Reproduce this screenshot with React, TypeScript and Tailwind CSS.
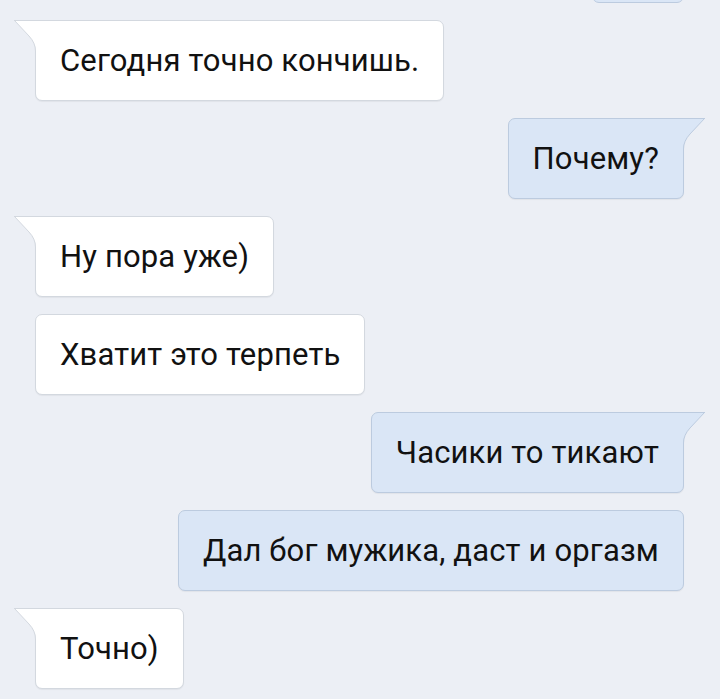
import React from 'react';

type Side = 'in' | 'out';

interface Message {
  text: string;
  side: Side;
  tail?: boolean;
}

const messages: Message[] = [
  { text: 'Сегодня точно кончишь.', side: 'in', tail: true },
  { text: 'Почему?', side: 'out', tail: true },
  { text: 'Ну пора уже)', side: 'in', tail: true },
  { text: 'Хватит это терпеть', side: 'in' },
  { text: 'Часики то тикают', side: 'out', tail: true },
  { text: 'Дал бог мужика, даст и оргазм', side: 'out' },
  { text: 'Точно)', side: 'in', tail: true },
];

const Tail = ({ side }: { side: Side }) => {
  const fill = side === 'in' ? '#ffffff' : '#dae6f6';
  const stroke = side === 'in' ? '#d3d8df' : '#bccbdf';
  return (
    <svg
      width="23"
      height="31"
      viewBox="0 0 23 31"
      className={
        side === 'in'
          ? 'absolute top-[-1px] left-[-22px]'
          : 'absolute top-[-1px] right-[-22px] -scale-x-100'
      }
    >
      <path d="M0 0 L23 0 L23 31 L21 31 L21.5 30 Q21.5 23 15 16 L0 0 Z" fill={fill} />
      <path d="M0 0.5 L23 0.5" stroke={stroke} strokeWidth="1" fill="none" />
      <path d="M0.5 0.5 L15 16 Q21.5 23 21.5 31" stroke={stroke} strokeWidth="1" fill="none" />
    </svg>
  );
};

const Bubble = ({ text, side, tail }: Message) => {
  const isIn = side === 'in';
  return (
    <div
      className={`
        relative h-[81px] flex items-center pl-[24px] pr-[24px] border rounded-[7px]
        shadow-[0_1px_1px_rgba(0,0,0,0.05)]
        ${isIn ? 'self-start bg-white border-[#d3d8df]' : 'self-end bg-[#dae6f6] border-[#bccbdf]'}
        ${tail ? (isIn ? 'rounded-tl-none' : 'rounded-tr-none') : ''}
      `}
    >
      {tail && <Tail side={side} />}
      <span className="text-[31px] tracking-[0.15px] leading-none text-[#111111] whitespace-nowrap">
        {text}
      </span>
    </div>
  );
};

export default function App() {
  return (
    <div
      className="w-[720px] h-[699px] overflow-hidden bg-[#eceff5]"
      style={{ fontFamily: 'Roboto, "Noto Sans", sans-serif' }}
    >
      <div className="flex flex-col gap-[17px] pl-[35px] pr-[36px] mt-[-78px]">
        {/* tail end of an earlier message, cut off by the top edge */}
        <div className="self-end w-[92px] h-[81px] border rounded-[7px] bg-[#dae6f6] border-[#bccbdf]" />
        {messages.map((m, i) => (
          <Bubble key={i} {...m} />
        ))}
      </div>
    </div>
  );
}
